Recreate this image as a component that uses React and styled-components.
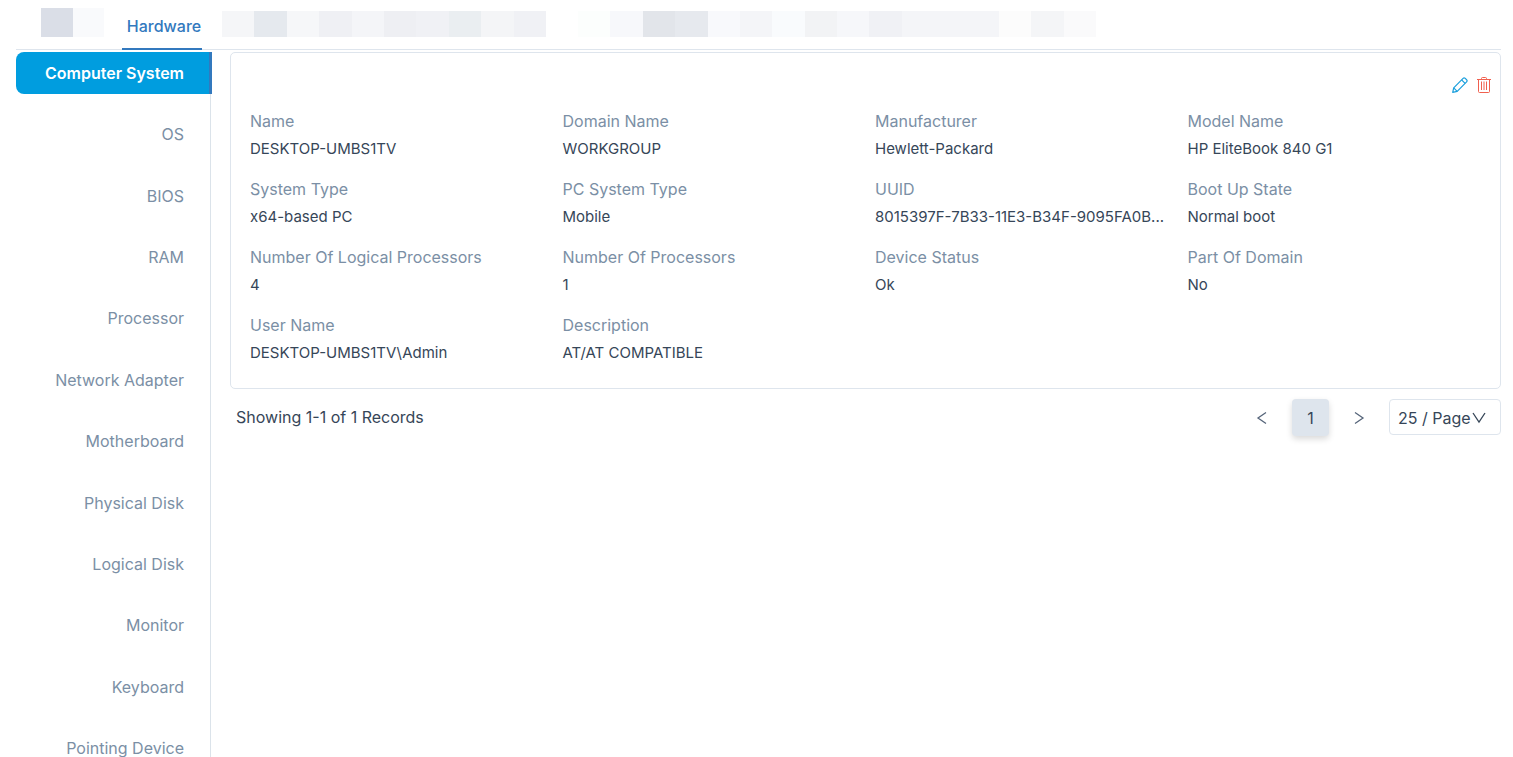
import React, { useState } from 'react';
import styled, { createGlobalStyle } from 'styled-components';

const GlobalStyle = createGlobalStyle`
  * {
    box-sizing: border-box;
  }

  body {
    margin: 0;
    background: #fff;
    color: #364658;
    font-family: Inter, 'Open Sans', sans-serif;
    font-size: 16px;
    line-height: 24px;
  }

  button,
  select {
    font: inherit;
    color: inherit;
  }
`;

const Page = styled.div`
  display: flex;
  flex-direction: column;
  height: 100vh;
  overflow: hidden;
  padding: 0 12px 0 16px;
`;

const TabBar = styled.nav`
  display: flex;
  flex-shrink: 0;
  height: 50px;
  border-bottom: 1px solid #dee5ed;
`;

const FirstTab = styled.div`
  padding-left: 25px;
`;

const Tab = styled.button`
  min-width: 80px;
  height: 50px;
  margin: 0 20px 0 18px;
  padding: 4px 0 0 4px;
  border: none;
  border-bottom: 2px solid #3279be;
  background: none;
  color: #3279be;
  font-weight: 500;
  white-space: nowrap;
  cursor: pointer;
`;

const MaskedTab = styled.button`
  display: flex;
  width: ${({ $width }) => $width}px;
  height: ${({ $tall }) => ($tall ? 29 : 26)}px;
  margin: ${({ $tall }) => ($tall ? '8px 0 0' : '11px 32px 0 0')};
  padding: 0;
  border: none;
  background: none;
`;

const MaskCell = styled.span`
  flex: 1;
  background: ${({ $color }) => $color};
`;

const Main = styled.div`
  display: flex;
  flex: 1;
  min-height: 0;
  padding-top: 2px;
`;

const Sidebar = styled.aside`
  flex: 0 0 195px;
  min-width: 0;
  border-right: 1px solid #dbe3ea;
`;

const SideList = styled.ul`
  display: flex;
  flex-direction: column;
  justify-content: space-between;
  width: 196px;
  min-height: 717px;
  margin: 0;
  padding: 0;
  list-style: none;
`;

const SideItem = styled.button`
  display: block;
  width: 100%;
  height: 42px;
  padding: 0 25px 0 0;
  border: none;
  border-right: 3px solid ${({ $active }) => ($active ? '#3279be' : 'transparent')};
  border-radius: 8px 0 0 8px;
  background: ${({ $active }) => ($active ? '#009ddf' : 'none')};
  color: ${({ $active }) => ($active ? '#fff' : '#7b8fa5')};
  font-weight: ${({ $active }) => ($active ? 600 : 400)};
  text-align: right;
  white-space: nowrap;
  cursor: pointer;
`;

const Content = styled.main`
  flex: 1;
  min-width: 0;
  padding-left: 19px;
`;

const Card = styled.section`
  padding: 24px 0 22px 19px;
  border: 1px solid #dee5ed;
  border-radius: 5px;
`;

const CardActions = styled.div`
  display: flex;
  justify-content: flex-end;
  gap: 8px;
  height: 31px;
  padding-right: 8px;
`;

const IconButton = styled.button`
  display: block;
  width: 16px;
  height: 16px;
  padding: 0;
  border: none;
  background: none;
  color: ${({ $color }) => $color};
  cursor: pointer;

  svg {
    display: block;
  }
`;

const Fields = styled.dl`
  display: grid;
  grid-template-columns: repeat(4, minmax(0, 1fr));
  row-gap: 14px;
  margin: 0;
`;

const Field = styled.div`
  padding-right: 16px;
`;

const Label = styled.dt`
  color: #7b8fa5;
  line-height: 27px;
  white-space: nowrap;
`;

const Value = styled.dd`
  margin: 0;
  font-size: 15px;
  line-height: 27px;
  white-space: nowrap;
`;

const Footer = styled.footer`
  display: flex;
  justify-content: space-between;
  padding: 10px 0 0 6px;
  line-height: 36px;
`;

const Pager = styled.div`
  display: flex;
  align-items: flex-start;
`;

const PagerArrow = styled.button`
  display: flex;
  align-items: center;
  justify-content: center;
  width: 60px;
  height: 36px;
  padding: 2px 0 0;
  border: none;
  background: none;
  cursor: pointer;
`;

const PageNumber = styled.button`
  width: 37px;
  height: 37px;
  padding: 0;
  border: none;
  border-radius: 4px;
  background: #dee5ed;
  box-shadow: 0 3px 6px rgba(0, 0, 0, 0.15);
  cursor: pointer;
`;

const SizePicker = styled.label`
  position: relative;
  width: 112px;
  height: 36px;

  svg {
    position: absolute;
    top: 12px;
    right: 15px;
    pointer-events: none;
  }
`;

const SizeSelect = styled.select`
  appearance: none;
  display: block;
  width: 100%;
  height: 36px;
  padding: 0 8px;
  border: 1px solid #dee5ed;
  border-radius: 4px;
  background: #fff;
`;

const MASKS = {
  first: ['#dadee7', '#f9fafc'],
  second: ['#f5f6f8', '#e5e9ee', '#f6f7f9', '#eff0f4', '#f4f5f8', '#eeeff3', '#f0f1f5', '#eaeef1', '#f4f5f7', '#f0f1f5'],
  third: [
    '#fcfefd', '#f7f8fb', '#e2e5ea', '#e6e9ee', '#f8f9fc', '#f4f5f8', '#f9fbfd', '#f2f3f5',
    '#f6f7fa', '#f0f1f5', '#f4f5f8', '#f4f5f8', '#f4f5f8', '#fcfcfc', '#f4f5f7', '#fafafb',
  ],
};

const SECTIONS = [
  'Computer System',
  'OS',
  'BIOS',
  'RAM',
  'Processor',
  'Network Adapter',
  'Motherboard',
  'Physical Disk',
  'Logical Disk',
  'Monitor',
  'Keyboard',
  'Pointing Device',
];

const FIELDS = [
  ['Name', 'DESKTOP-UMBS1TV'],
  ['Domain Name', 'WORKGROUP'],
  ['Manufacturer', 'Hewlett-Packard'],
  ['Model Name', 'HP EliteBook 840 G1'],
  ['System Type', 'x64-based PC'],
  ['PC System Type', 'Mobile'],
  ['UUID', '8015397F-7B33-11E3-B34F-9095FA0B...'],
  ['Boot Up State', 'Normal boot'],
  ['Number Of Logical Processors', '4'],
  ['Number Of Processors', '1'],
  ['Device Status', 'Ok'],
  ['Part Of Domain', 'No'],
  ['User Name', 'DESKTOP-UMBS1TV\\Admin'],
  ['Description', 'AT/AT COMPATIBLE'],
];

const PencilIcon = () => (
  <svg width="16" height="16" viewBox="0 0 16 16" fill="none" stroke="currentColor" strokeWidth="1.2" strokeLinejoin="round">
    <path d="M.7 15.3 1.7 10.8 11.1 1.4Q12 .5 13 1.2L14.8 3Q15.5 4 14.6 4.9L5.2 14.3Z" />
    <path d="M1.7 10.8 5.2 14.3M9.6 2.9 13.1 6.4" />
  </svg>
);

const TrashIcon = () => (
  <svg width="16" height="16" viewBox="0 0 16 16" fill="none" stroke="currentColor">
    <path d="M1 2.5H15M5.5 2.5V1.5Q5.5.5 6.5.5H9.5Q10.5.5 10.5 1.5V2.5" />
    <path d="M2.5 2.5V14.5Q2.5 15.5 3.5 15.5H12.5Q13.5 15.5 13.5 14.5V2.5" />
    <path d="M5.5 4.5V13M8 4.5V13M10.5 4.5V13" />
  </svg>
);

const ArrowIcon = ({ path, color = '#56657a' }) => (
  <svg width="14" height="14" viewBox="0 0 14 14" fill="none" stroke={color} strokeWidth="1.3">
    <path d={path} />
  </svg>
);

const Masked = ({ label, colors, width, tall }) => (
  <MaskedTab aria-label={label} $width={width} $tall={tall}>
    {colors.map((color, index) => (
      <MaskCell key={index} $color={color} />
    ))}
  </MaskedTab>
);

const App = () => {
  const [section, setSection] = useState(SECTIONS[0]);
  const [pageSize, setPageSize] = useState('25');

  return (
    <>
      <GlobalStyle />
      <Page>
        <TabBar>
          <FirstTab>
            <Masked label="Overview" colors={MASKS.first} width={63} tall />
          </FirstTab>
          <Tab>Hardware</Tab>
          <Masked label="Software" colors={MASKS.second} width={324} />
          <Masked label="Relations" colors={MASKS.third} width={518} />
        </TabBar>
        <Main>
          <Sidebar>
            <SideList>
              {SECTIONS.map(name => (
                <li key={name}>
                  <SideItem $active={name === section} onClick={() => setSection(name)}>
                    {name}
                  </SideItem>
                </li>
              ))}
            </SideList>
          </Sidebar>
          <Content>
            <Card>
              <CardActions>
                <IconButton aria-label="Edit" $color="#1a9fdc">
                  <PencilIcon />
                </IconButton>
                <IconButton aria-label="Delete" $color="#f0604f">
                  <TrashIcon />
                </IconButton>
              </CardActions>
              <Fields>
                {FIELDS.map(([label, value]) => (
                  <Field key={label}>
                    <Label>{label}</Label>
                    <Value>{value}</Value>
                  </Field>
                ))}
              </Fields>
            </Card>
            <Footer>
              <span>Showing 1-1 of 1 Records</span>
              <Pager>
                <PagerArrow aria-label="Previous page">
                  <ArrowIcon path="M11 1.5 3 7 11 12.5" />
                </PagerArrow>
                <PageNumber>1</PageNumber>
                <PagerArrow aria-label="Next page">
                  <ArrowIcon path="M3 1.5 11 7 3 12.5" />
                </PagerArrow>
                <SizePicker>
                  <SizeSelect
                    aria-label="Records per page"
                    value={pageSize}
                    onChange={e => setPageSize(e.target.value)}
                  >
                    <option value="25">25 / Page</option>
                    <option value="50">50 / Page</option>
                    <option value="100">100 / Page</option>
                  </SizeSelect>
                  <ArrowIcon path="M1 2 7 11 13 2" color="#364658" />
                </SizePicker>
              </Pager>
            </Footer>
          </Content>
        </Main>
      </Page>
    </>
  );
};

export default App;
